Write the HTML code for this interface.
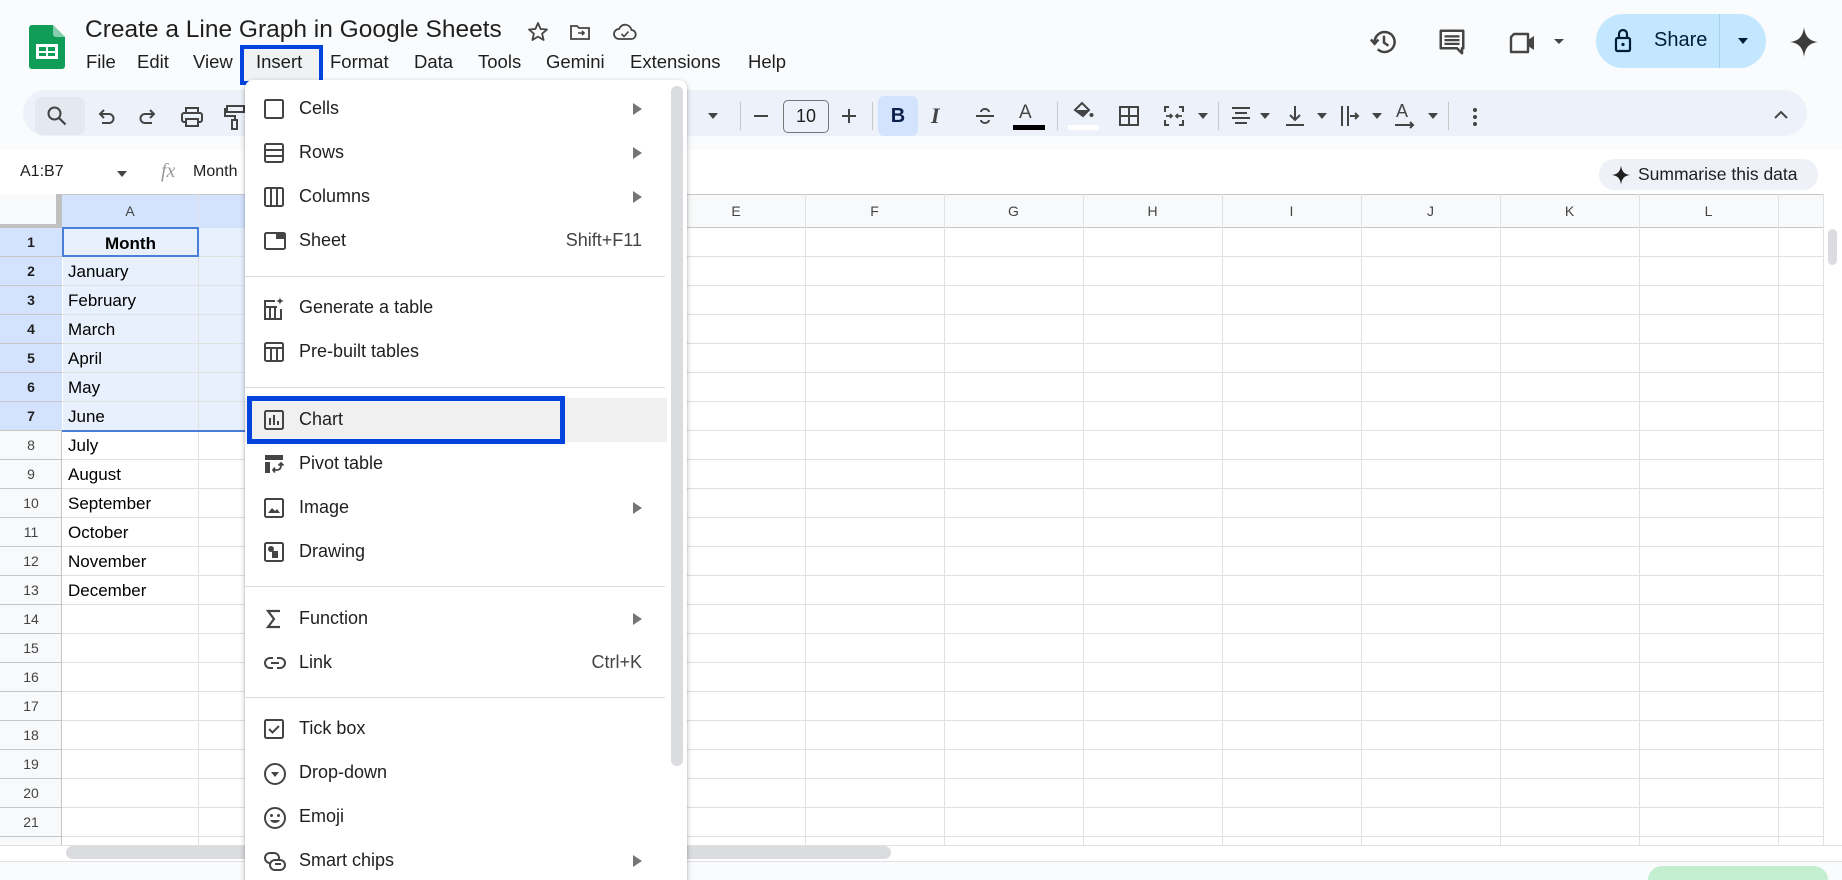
<!DOCTYPE html>
<html style="height:880px;overflow:hidden"><head><meta charset="utf-8">
<style>
*{box-sizing:border-box;margin:0;padding:0}
body{width:1842px;height:880px;overflow:hidden;background:#f9fbfd;font-family:"Liberation Sans",Arial,sans-serif;color:#1f1f1f;position:relative}
.a{position:absolute}
.menu span{position:absolute}
.mi{position:absolute;left:0;width:442px;height:44px}
.mi .t{position:absolute;left:54px;top:11px;font-size:18px;color:#1f1f1f;white-space:nowrap}
.mi svg{position:absolute;left:18px;top:11px}
.mi .ar{position:absolute;left:388px;top:16px;width:0;height:0;border-left:9px solid #757575;border-top:6px solid transparent;border-bottom:6px solid transparent}
.mi .sc{position:absolute;right:45px;top:11px;font-size:18px;color:#444}
.div{position:absolute;left:0;width:420px;height:1px;background:#dadce0}
.ti{position:absolute;top:104px}
.dd{position:absolute;top:113px;width:0;height:0;border-top:6px solid #444;border-left:5px solid transparent;border-right:5px solid transparent}
.sep{position:absolute;top:102px;width:1px;height:28px;background:#c7c7c7}
.rn{position:absolute;left:0;width:62px;height:29px;text-align:center;font-size:14px;line-height:29px;color:#444}
.cv{position:absolute;left:68px;height:29px;font-size:17px;line-height:29px;color:#000}
.ch{position:absolute;top:194px;height:34px;line-height:34px;text-align:center;font-size:14px;color:#444}
.vl{position:absolute;top:194px;width:1px;height:651px;background:#e1e1e1}
</style></head><body>

<svg class="a" style="left:29px;top:25px" width="36" height="44" viewBox="0 0 36 44"><path d="M3 0h21l12 12v29a3 3 0 0 1-3 3H3a3 3 0 0 1-3-3V3a3 3 0 0 1 3-3z" fill="#0f9d58"/><path d="M24 0l12 12H27a3 3 0 0 1-3-3z" fill="#87ceac"/><rect x="7" y="19" width="22" height="15" fill="#fff"/><rect x="10" y="22" width="7" height="4" fill="#0f9d58"/><rect x="19" y="22" width="7" height="4" fill="#0f9d58"/><rect x="10" y="28" width="7" height="3" fill="#0f9d58"/><rect x="19" y="28" width="7" height="3" fill="#0f9d58"/></svg>

<div class="a" style="left:85px;top:16px;font-size:24.5px;color:#1f1f1f;white-space:nowrap">Create a Line Graph in Google Sheets</div>
<svg class="a" style="left:526px;top:20px" width="24" height="24" viewBox="0 0 24 24"><path d="M12 3l2.6 6 6.4.5-4.9 4.2 1.5 6.3L12 16.6 6.4 20l1.5-6.3L3 9.5 9.4 9z" fill="none" stroke="#444" stroke-width="1.8" stroke-linejoin="round"/></svg>
<svg class="a" style="left:568px;top:20px" width="24" height="24" viewBox="0 0 24 24"><path d="M3 6h6l2 2h10v11H3z" fill="none" stroke="#444" stroke-width="1.8"/><path d="M10 13h6m-2-2l2 2-2 2" fill="none" stroke="#444" stroke-width="1.6"/></svg>
<svg class="a" style="left:612px;top:20px" width="26" height="24" viewBox="0 0 26 24"><path d="M7 19h12a4.5 4.5 0 0 0 .5-9A6.5 6.5 0 0 0 7 9a5 5 0 0 0 0 10z" fill="none" stroke="#444" stroke-width="1.8"/><path d="M9.5 14l2.5 2.5 4.5-5" fill="none" stroke="#444" stroke-width="1.6"/></svg>

<div class="a" style="top:51px;left:86px;font-size:18.5px;white-space:nowrap">
<span class="a" style="left:0">File</span><span class="a" style="left:51px">Edit</span><span class="a" style="left:107px">View</span><span class="a" style="left:170px">Insert</span><span class="a" style="left:244px">Format</span><span class="a" style="left:328px">Data</span><span class="a" style="left:392px">Tools</span><span class="a" style="left:460px">Gemini</span><span class="a" style="left:544px">Extensions</span><span class="a" style="left:662px">Help</span></div>
<div class="a" style="left:240px;top:45px;width:83px;height:40px;border:4px solid #0044dd;background:rgba(0,0,0,0.04)"></div>

<svg class="a" style="left:1369px;top:27px" width="30" height="30" viewBox="0 0 24 24"><path d="M4.5 12A8 8 0 1 1 7 17.8" fill="none" stroke="#444" stroke-width="2"/><path d="M1.5 10l3 3.5 3-3.5" fill="none" stroke="#444" stroke-width="2"/><path d="M12 7v5.5l3.5 2.5" fill="none" stroke="#444" stroke-width="2"/></svg>
<svg class="a" style="left:1437px;top:27px" width="30" height="30" viewBox="0 0 24 24"><path d="M3 3h18v14h-1v4l-4-4H3z" fill="none" stroke="#444" stroke-width="2" stroke-linejoin="round"/><path d="M6 7.5h12M6 10.5h12M6 13.5h12" stroke="#444" stroke-width="1.8"/></svg>
<svg class="a" style="left:1508px;top:29px" width="32" height="28" viewBox="0 0 32 28"><path d="M6 5h14v18H3V8z" fill="none" stroke="#444" stroke-width="2.4" stroke-linejoin="round"/><path d="M20 11l6-4v14l-6-4z" fill="#444"/></svg>
<div class="a" style="left:1554px;top:39px;border-top:5px solid #444;border-left:5px solid transparent;border-right:5px solid transparent"></div>
<div class="a" style="left:1596px;top:14px;width:170px;height:54px;border-radius:27px;background:#c2e7ff"></div>
<div class="a" style="left:1719px;top:14px;width:1px;height:54px;background:#a8d3f0"></div>
<svg class="a" style="left:1613px;top:27px" width="20" height="26" viewBox="0 0 20 26"><rect x="3" y="11" width="14" height="13" rx="1.5" fill="none" stroke="#001d35" stroke-width="2.2"/><path d="M6 11V7a4 4 0 0 1 8 0v4" fill="none" stroke="#001d35" stroke-width="2.2"/><circle cx="10" cy="17.5" r="1.6" fill="#001d35"/></svg>
<div class="a" style="left:1654px;top:29px;font-size:20px;color:#001d35">Share</div>
<div class="a" style="left:1738px;top:38px;border-top:6px solid #001d35;border-left:5px solid transparent;border-right:5px solid transparent"></div>
<svg class="a" style="left:1790px;top:27px" width="28" height="30" viewBox="0 0 28 30"><path d="M14 0C15 9 19 14 28 15 19 16 15 21 14 30 13 21 9 16 0 15 9 14 13 9 14 0z" fill="#3c3c3c"/></svg>

<div class="a" style="left:23px;top:90px;width:1784px;height:46px;border-radius:23px;background:#edf2fa"></div>
<div class="a" style="left:35px;top:97px;width:50px;height:38px;border-radius:8px;background:#e3e8f1"></div>
<svg class="ti" style="left:46px;top:105px" width="22" height="22" viewBox="0 0 22 22"><circle cx="8.5" cy="8.5" r="6" fill="none" stroke="#444" stroke-width="2"/><path d="M13 13l6.5 6.5" stroke="#444" stroke-width="2.2"/></svg>
<svg class="ti" style="left:95px;top:106px" width="22" height="22" viewBox="0 0 22 22"><path d="M6 8h8a4.5 4.5 0 0 1 0 9H7" fill="none" stroke="#444" stroke-width="2"/><path d="M9 4L5 8l4 4" fill="none" stroke="#444" stroke-width="2"/></svg>
<svg class="ti" style="left:137px;top:106px" width="22" height="22" viewBox="0 0 22 22"><path d="M16 8H8a4.5 4.5 0 0 0 0 9h7" fill="none" stroke="#444" stroke-width="2"/><path d="M13 4l4 4-4 4" fill="none" stroke="#444" stroke-width="2"/></svg>
<svg class="ti" style="left:180px;top:105px" width="24" height="24" viewBox="0 0 24 24"><rect x="6" y="3" width="12" height="5" fill="none" stroke="#444" stroke-width="2"/><rect x="2" y="8" width="20" height="9" rx="2" fill="none" stroke="#444" stroke-width="2"/><rect x="6" y="14" width="12" height="7" fill="#edf2fa" stroke="#444" stroke-width="2"/></svg>
<svg class="ti" style="left:224px;top:104px" width="22" height="26" viewBox="0 0 22 26"><rect x="3" y="2" width="17" height="6" fill="none" stroke="#444" stroke-width="2"/><path d="M3 5H1v7h10v4" fill="none" stroke="#444" stroke-width="2"/><rect x="8" y="16" width="5" height="9" fill="none" stroke="#444" stroke-width="2"/></svg>

<div class="dd" style="left:708px"></div>
<div class="sep" style="left:740px"></div>
<div class="a" style="left:754px;top:115px;width:14px;height:2px;background:#444"></div>
<div class="a" style="left:783px;top:100px;width:46px;height:33px;border:1px solid #747775;border-radius:5px;text-align:center;line-height:31px;font-size:18px;color:#1f1f1f">10</div>
<div class="a" style="left:842px;top:115px;width:14px;height:2px;background:#444"></div>
<div class="a" style="left:848px;top:109px;width:2px;height:14px;background:#444"></div>
<div class="sep" style="left:872px"></div>
<div class="a" style="left:878px;top:96px;width:40px;height:40px;border-radius:6px;background:#d3e3fd;text-align:center;line-height:40px;font-size:20px;font-weight:bold;color:#0b1f4d">B</div>
<div class="a" style="left:931px;top:103px;font-size:22px;font-style:italic;font-weight:bold;font-family:'Liberation Serif',serif;color:#444">I</div>
<svg class="ti" style="left:974px;top:105px" width="22" height="22" viewBox="0 0 22 22"><path d="M2 11h18" stroke="#444" stroke-width="2"/><path d="M7 7a4 3 0 0 1 8 0M7 15a4 3 0 0 0 8 0" fill="none" stroke="#444" stroke-width="2"/></svg>
<div class="a" style="left:1019px;top:102px;font-size:19px;color:#444">A</div>
<div class="a" style="left:1013px;top:125px;width:32px;height:5px;background:#000"></div>
<div class="sep" style="left:1057px"></div>
<svg class="ti" style="left:1071px;top:100px" width="24" height="22" viewBox="0 0 24 22"><path d="M4 10l7-7 7 7-6 6z" fill="none" stroke="#444" stroke-width="2"/><path d="M4 10h14l-6 6z" fill="#444"/><circle cx="20.5" cy="15" r="2" fill="#444"/></svg>
<div class="a" style="left:1068px;top:125px;width:31px;height:5px;background:#fff"></div>
<svg class="ti" style="left:1118px;top:105px" width="22" height="22" viewBox="0 0 22 22"><rect x="2" y="2" width="18" height="18" fill="none" stroke="#444" stroke-width="2"/><path d="M11 2v18M2 11h18" stroke="#444" stroke-width="2"/></svg>
<svg class="ti" style="left:1163px;top:105px" width="22" height="22" viewBox="0 0 22 22"><path d="M6 2H2v5M2 15v5h4M16 2h4v5M20 15v5h-4" fill="none" stroke="#444" stroke-width="2"/><path d="M3 11h6m-2-2l2 2-2 2M19 11h-6m2-2l-2 2 2 2" fill="none" stroke="#444" stroke-width="1.8"/></svg>
<div class="dd" style="left:1198px"></div>
<div class="sep" style="left:1218px"></div>
<svg class="ti" style="left:1230px;top:105px" width="22" height="22" viewBox="0 0 22 22"><path d="M2 3h18M5 8h12M2 13h18M5 18h12" stroke="#444" stroke-width="2"/></svg>
<div class="dd" style="left:1260px"></div>
<svg class="ti" style="left:1284px;top:104px" width="22" height="24" viewBox="0 0 22 24"><path d="M11 2v14m-5-5l5 5 5-5" fill="none" stroke="#444" stroke-width="2"/><path d="M2 21h18" stroke="#444" stroke-width="2"/></svg>
<div class="dd" style="left:1317px"></div>
<svg class="ti" style="left:1340px;top:104px" width="22" height="24" viewBox="0 0 22 24"><path d="M2 2v20M8 2v20" stroke="#444" stroke-width="2"/><path d="M10 12h8m-3-3l3 3-3 3" fill="none" stroke="#444" stroke-width="2"/></svg>
<div class="dd" style="left:1372px"></div>
<div class="a" style="left:1396px;top:101px;font-size:18px;color:#444">A</div>
<svg class="ti" style="left:1395px;top:121px" width="22" height="10" viewBox="0 0 22 10"><path d="M0 4h18m-3-3l3 3-3 3" fill="none" stroke="#444" stroke-width="2"/></svg>
<div class="dd" style="left:1428px"></div>
<div class="sep" style="left:1448px"></div>
<div class="a" style="left:1473px;top:108px;width:4px;height:4px;border-radius:2px;background:#444;box-shadow:0 7px 0 #444,0 14px 0 #444"></div>
<svg class="ti" style="left:1772px;top:108px" width="18" height="14" viewBox="0 0 18 14"><path d="M3 10l6-6 6 6" fill="none" stroke="#444" stroke-width="2"/></svg>

<div class="a" style="left:0;top:150px;width:1842px;height:44px;background:#fff"></div>
<div class="a" style="left:20px;top:163px;font-size:16px;color:#1f1f1f">A1:B7</div>
<div class="a" style="left:117px;top:171px;border-top:6px solid #444;border-left:5px solid transparent;border-right:5px solid transparent"></div>
<div class="a" style="left:161px;top:160px;font-size:20px;font-style:italic;font-family:'Liberation Serif',serif;color:#999">fx</div>
<div class="a" style="left:193px;top:163px;font-size:16px;color:#1f1f1f">Month</div>
<div class="a" style="left:1599px;top:159px;width:219px;height:31px;border-radius:15px;background:#eef2f8"></div>
<svg class="a" style="left:1612px;top:165px" width="18" height="20" viewBox="0 0 28 30"><path d="M14 0C15 9 19 14 28 15 19 16 15 21 14 30 13 21 9 16 0 15 9 14 13 9 14 0z" fill="#1f1f1f"/></svg>
<div class="a" style="left:1638px;top:164px;font-size:17.5px;color:#1f1f1f">Summarise this data</div>

<div class="a" style="left:0;top:194px;width:1842px;height:651px;background:#fff"></div>
<div class="a" style="left:0;top:194px;width:1823px;height:34px;background:#f8f9fa;border-top:1px solid #c7c7c7;border-bottom:1px solid #c7c7c7"></div>
<div class="a" style="left:0;top:228px;width:62px;height:617px;background:#f8f9fa;border-right:1px solid #c7c7c7"></div>
<div class="a" style="left:0;top:194px;width:62px;height:34px;background:#f8f9fa;border-right:6px solid #c0c0c0;border-bottom:4px solid #c0c0c0"></div>
<div class="a" style="left:62px;top:195px;width:185px;height:33px;background:#d3e3fd"></div>
<div class="a" style="left:0;top:228px;width:62px;height:203px;background:#d3e3fd"></div>
<div class="a" style="left:63px;top:228px;width:185px;height:203px;background:#e8f0fd"></div>
<div class="a" style="left:62px;top:228px;width:1761px;height:609px;background:repeating-linear-gradient(to bottom,transparent 0 28px,#e1e1e1 28px 29px)"></div>
<div class="a" style="left:0;top:228px;width:62px;height:609px;background:repeating-linear-gradient(to bottom,transparent 0 28px,#c7c7c7 28px 29px)"></div>
<div class="vl" style="left:198px"></div><div class="vl" style="left:667px"></div><div class="vl" style="left:805px"></div><div class="vl" style="left:944px"></div><div class="vl" style="left:1083px"></div><div class="vl" style="left:1222px"></div><div class="vl" style="left:1361px"></div><div class="vl" style="left:1500px"></div><div class="vl" style="left:1639px"></div><div class="vl" style="left:1778px"></div>
<div class="a" style="left:62px;top:430px;width:186px;height:2px;background:#4a7fd9"></div>
<div class="a" style="left:62px;top:227px;width:137px;height:30px;border:2px solid #4a7fd9"></div>

<div class="ch" style="left:62px;width:136px">A</div>
<div class="ch" style="left:667px;width:138px">E</div><div class="ch" style="left:805px;width:139px">F</div><div class="ch" style="left:944px;width:139px">G</div><div class="ch" style="left:1083px;width:139px">H</div><div class="ch" style="left:1222px;width:139px">I</div><div class="ch" style="left:1361px;width:139px">J</div><div class="ch" style="left:1500px;width:139px">K</div><div class="ch" style="left:1639px;width:139px">L</div>

<div class="rn" style="top:228px;font-weight:bold;color:#1f1f1f">1</div>
<div class="rn" style="top:257px;font-weight:bold;color:#1f1f1f">2</div>
<div class="rn" style="top:286px;font-weight:bold;color:#1f1f1f">3</div>
<div class="rn" style="top:315px;font-weight:bold;color:#1f1f1f">4</div>
<div class="rn" style="top:344px;font-weight:bold;color:#1f1f1f">5</div>
<div class="rn" style="top:373px;font-weight:bold;color:#1f1f1f">6</div>
<div class="rn" style="top:402px;font-weight:bold;color:#1f1f1f">7</div>
<div class="rn" style="top:431px">8</div><div class="rn" style="top:460px">9</div><div class="rn" style="top:489px">10</div><div class="rn" style="top:518px">11</div><div class="rn" style="top:547px">12</div><div class="rn" style="top:576px">13</div><div class="rn" style="top:605px">14</div><div class="rn" style="top:634px">15</div><div class="rn" style="top:663px">16</div><div class="rn" style="top:692px">17</div><div class="rn" style="top:721px">18</div><div class="rn" style="top:750px">19</div><div class="rn" style="top:779px">20</div><div class="rn" style="top:808px">21</div>

<div class="cv" style="top:229px;left:62px;width:137px;text-align:center;font-weight:bold">Month</div>
<div class="cv" style="top:257px">January</div><div class="cv" style="top:286px">February</div><div class="cv" style="top:315px">March</div><div class="cv" style="top:344px">April</div><div class="cv" style="top:373px">May</div><div class="cv" style="top:402px">June</div><div class="cv" style="top:431px">July</div><div class="cv" style="top:460px">August</div><div class="cv" style="top:489px">September</div><div class="cv" style="top:518px">October</div><div class="cv" style="top:547px">November</div><div class="cv" style="top:576px">December</div>

<div class="a" style="left:1823px;top:194px;width:19px;height:651px;background:#fff;border-left:1px solid #e1e1e1"></div>
<div class="a" style="left:1828px;top:229px;width:9px;height:36px;border-radius:5px;background:#dadce0"></div>
<div class="a" style="left:0;top:845px;width:1842px;height:16px;background:#fff;border-top:1px solid #e1e1e1"></div>
<div class="a" style="left:66px;top:846px;width:825px;height:13px;border-radius:7px;background:#dadce0"></div>
<div class="a" style="left:0;top:861px;width:1842px;height:19px;background:#f9fbfd;border-top:1px solid #e1e1e1"></div>
<div class="a" style="left:1648px;top:866px;width:180px;height:14px;border-radius:14px 14px 0 0;background:#c4eed0"></div>

<div class="a menu" style="left:245px;top:80px;width:442px;height:800px;background:#fff;border-radius:8px 8px 0 0;box-shadow:0 2px 6px rgba(0,0,0,.25),0 1px 2px rgba(0,0,0,.15);overflow:hidden">
 <div class="a" style="left:426px;top:6px;width:12px;height:680px;border-radius:6px;background:#dadce0"></div>
 <div class="mi" style="top:7px"><svg width="22" height="22" viewBox="0 0 22 22"><rect x="2" y="2" width="18" height="18" rx="1.5" fill="none" stroke="#444" stroke-width="2"/></svg><span class="t">Cells</span><span class="ar"></span></div>
 <div class="mi" style="top:51px"><svg width="22" height="22" viewBox="0 0 22 22"><rect x="2" y="2" width="18" height="18" rx="1.5" fill="none" stroke="#444" stroke-width="2"/><path d="M2 8h18M2 14h18" stroke="#444" stroke-width="2"/></svg><span class="t">Rows</span><span class="ar"></span></div>
 <div class="mi" style="top:95px"><svg width="22" height="22" viewBox="0 0 22 22"><rect x="2" y="2" width="18" height="18" rx="1.5" fill="none" stroke="#444" stroke-width="2"/><path d="M8 2v18M14 2v18" stroke="#444" stroke-width="2"/></svg><span class="t">Columns</span><span class="ar"></span></div>
 <div class="mi" style="top:139px"><svg width="24" height="22" viewBox="0 0 24 22"><rect x="2" y="3" width="20" height="16" rx="1.5" fill="none" stroke="#444" stroke-width="2"/><rect x="13" y="3" width="9" height="6" fill="#444"/></svg><span class="t">Sheet</span><span class="sc">Shift+F11</span></div>
 <div class="div" style="top:196px"></div>
 <div class="mi" style="top:206px"><svg width="22" height="24" viewBox="0 0 22 24"><path d="M12 4H2v18h16V12" fill="none" stroke="#444" stroke-width="2"/><path d="M2 10h12M7 10v12M12 10v12" stroke="#444" stroke-width="2"/><path d="M17 0c.3 2.5 1.3 3.5 4 4-2.7.5-3.7 1.5-4 4-.3-2.5-1.3-3.5-4-4 2.7-.5 3.7-1.5 4-4z" fill="#444"/></svg><span class="t">Generate a table</span></div>
 <div class="mi" style="top:250px"><svg width="22" height="22" viewBox="0 0 22 22"><rect x="2" y="2" width="18" height="18" rx="1.5" fill="none" stroke="#444" stroke-width="2"/><path d="M2 7h18M8 7v13M14 7v13" stroke="#444" stroke-width="2"/></svg><span class="t">Pre-built tables</span></div>
 <div class="div" style="top:307px"></div>
 <div class="a" style="left:0;top:318px;width:422px;height:44px;background:#f0f0f0"></div>
 <div class="mi" style="top:318px"><svg width="22" height="22" viewBox="0 0 22 22"><rect x="2" y="2" width="18" height="18" rx="1.5" fill="none" stroke="#444" stroke-width="2"/><path d="M7 9v7M11 6v10M15 12v4" stroke="#444" stroke-width="2"/></svg><span class="t">Chart</span></div>
 <div class="a" style="left:2px;top:316px;width:318px;height:48px;border:5px solid #0044dd"></div>
 <div class="mi" style="top:362px"><svg width="22" height="22" viewBox="0 0 22 22"><rect x="2" y="2" width="18" height="5" fill="#444"/><rect x="2" y="9" width="5" height="11" fill="#444"/><path d="M10 17h4a4 4 0 0 0 4-4v-3m-2.5 2.5L18 10l2.5 2.5M12 14.5L10 17l2 2.5" fill="none" stroke="#444" stroke-width="1.8"/></svg><span class="t">Pivot table</span></div>
 <div class="mi" style="top:406px"><svg width="22" height="22" viewBox="0 0 22 22"><rect x="2" y="2" width="18" height="18" rx="1.5" fill="none" stroke="#444" stroke-width="2"/><path d="M5 16l4-5 3 3 2-2 3 4z" fill="#444"/></svg><span class="t">Image</span><span class="ar"></span></div>
 <div class="mi" style="top:450px"><svg width="22" height="22" viewBox="0 0 22 22"><rect x="2" y="2" width="18" height="18" rx="1.5" fill="none" stroke="#444" stroke-width="2"/><circle cx="8" cy="8" r="3" fill="#444"/><rect x="9" y="10" width="6" height="7" fill="#444"/></svg><span class="t">Drawing</span></div>
 <div class="div" style="top:506px"></div>
 <div class="mi" style="top:517px"><svg width="22" height="22" viewBox="0 0 22 22"><path d="M17 3H5l6 8-6 8h12" fill="none" stroke="#444" stroke-width="2.2"/></svg><span class="t">Function</span><span class="ar"></span></div>
 <div class="mi" style="top:561px"><svg width="24" height="22" viewBox="0 0 24 22"><path d="M10 6H7a5 5 0 0 0 0 10h3M14 6h3a5 5 0 0 1 0 10h-3M8 11h8" fill="none" stroke="#444" stroke-width="2"/></svg><span class="t">Link</span><span class="sc">Ctrl+K</span></div>
 <div class="div" style="top:617px"></div>
 <div class="mi" style="top:627px"><svg width="22" height="22" viewBox="0 0 22 22"><rect x="2" y="2" width="18" height="18" rx="1.5" fill="none" stroke="#444" stroke-width="2"/><path d="M6 11l3.5 3.5L16 8" fill="none" stroke="#444" stroke-width="2"/></svg><span class="t">Tick box</span></div>
 <div class="mi" style="top:671px"><svg width="24" height="24" viewBox="0 0 24 24"><circle cx="12" cy="12" r="10" fill="none" stroke="#444" stroke-width="2"/><path d="M8 10h8l-4 5z" fill="#444"/></svg><span class="t">Drop-down</span></div>
 <div class="mi" style="top:715px"><svg width="24" height="24" viewBox="0 0 24 24"><circle cx="12" cy="12" r="10" fill="none" stroke="#444" stroke-width="2"/><circle cx="8.5" cy="9.5" r="1.5" fill="#444"/><circle cx="15.5" cy="9.5" r="1.5" fill="#444"/><path d="M7 14a5.5 5 0 0 0 10 0z" fill="#444"/></svg><span class="t">Emoji</span></div>
 <div class="mi" style="top:759px"><svg width="24" height="24" viewBox="0 0 24 24"><rect x="2" y="3" width="14" height="10" rx="5" fill="none" stroke="#444" stroke-width="2"/><rect x="7" y="10" width="15" height="10" rx="5" fill="#fff" stroke="#444" stroke-width="2"/><path d="M12 14h6" stroke="#444" stroke-width="2"/></svg><span class="t">Smart chips</span><span class="ar"></span></div>
</div>

</body></html>
